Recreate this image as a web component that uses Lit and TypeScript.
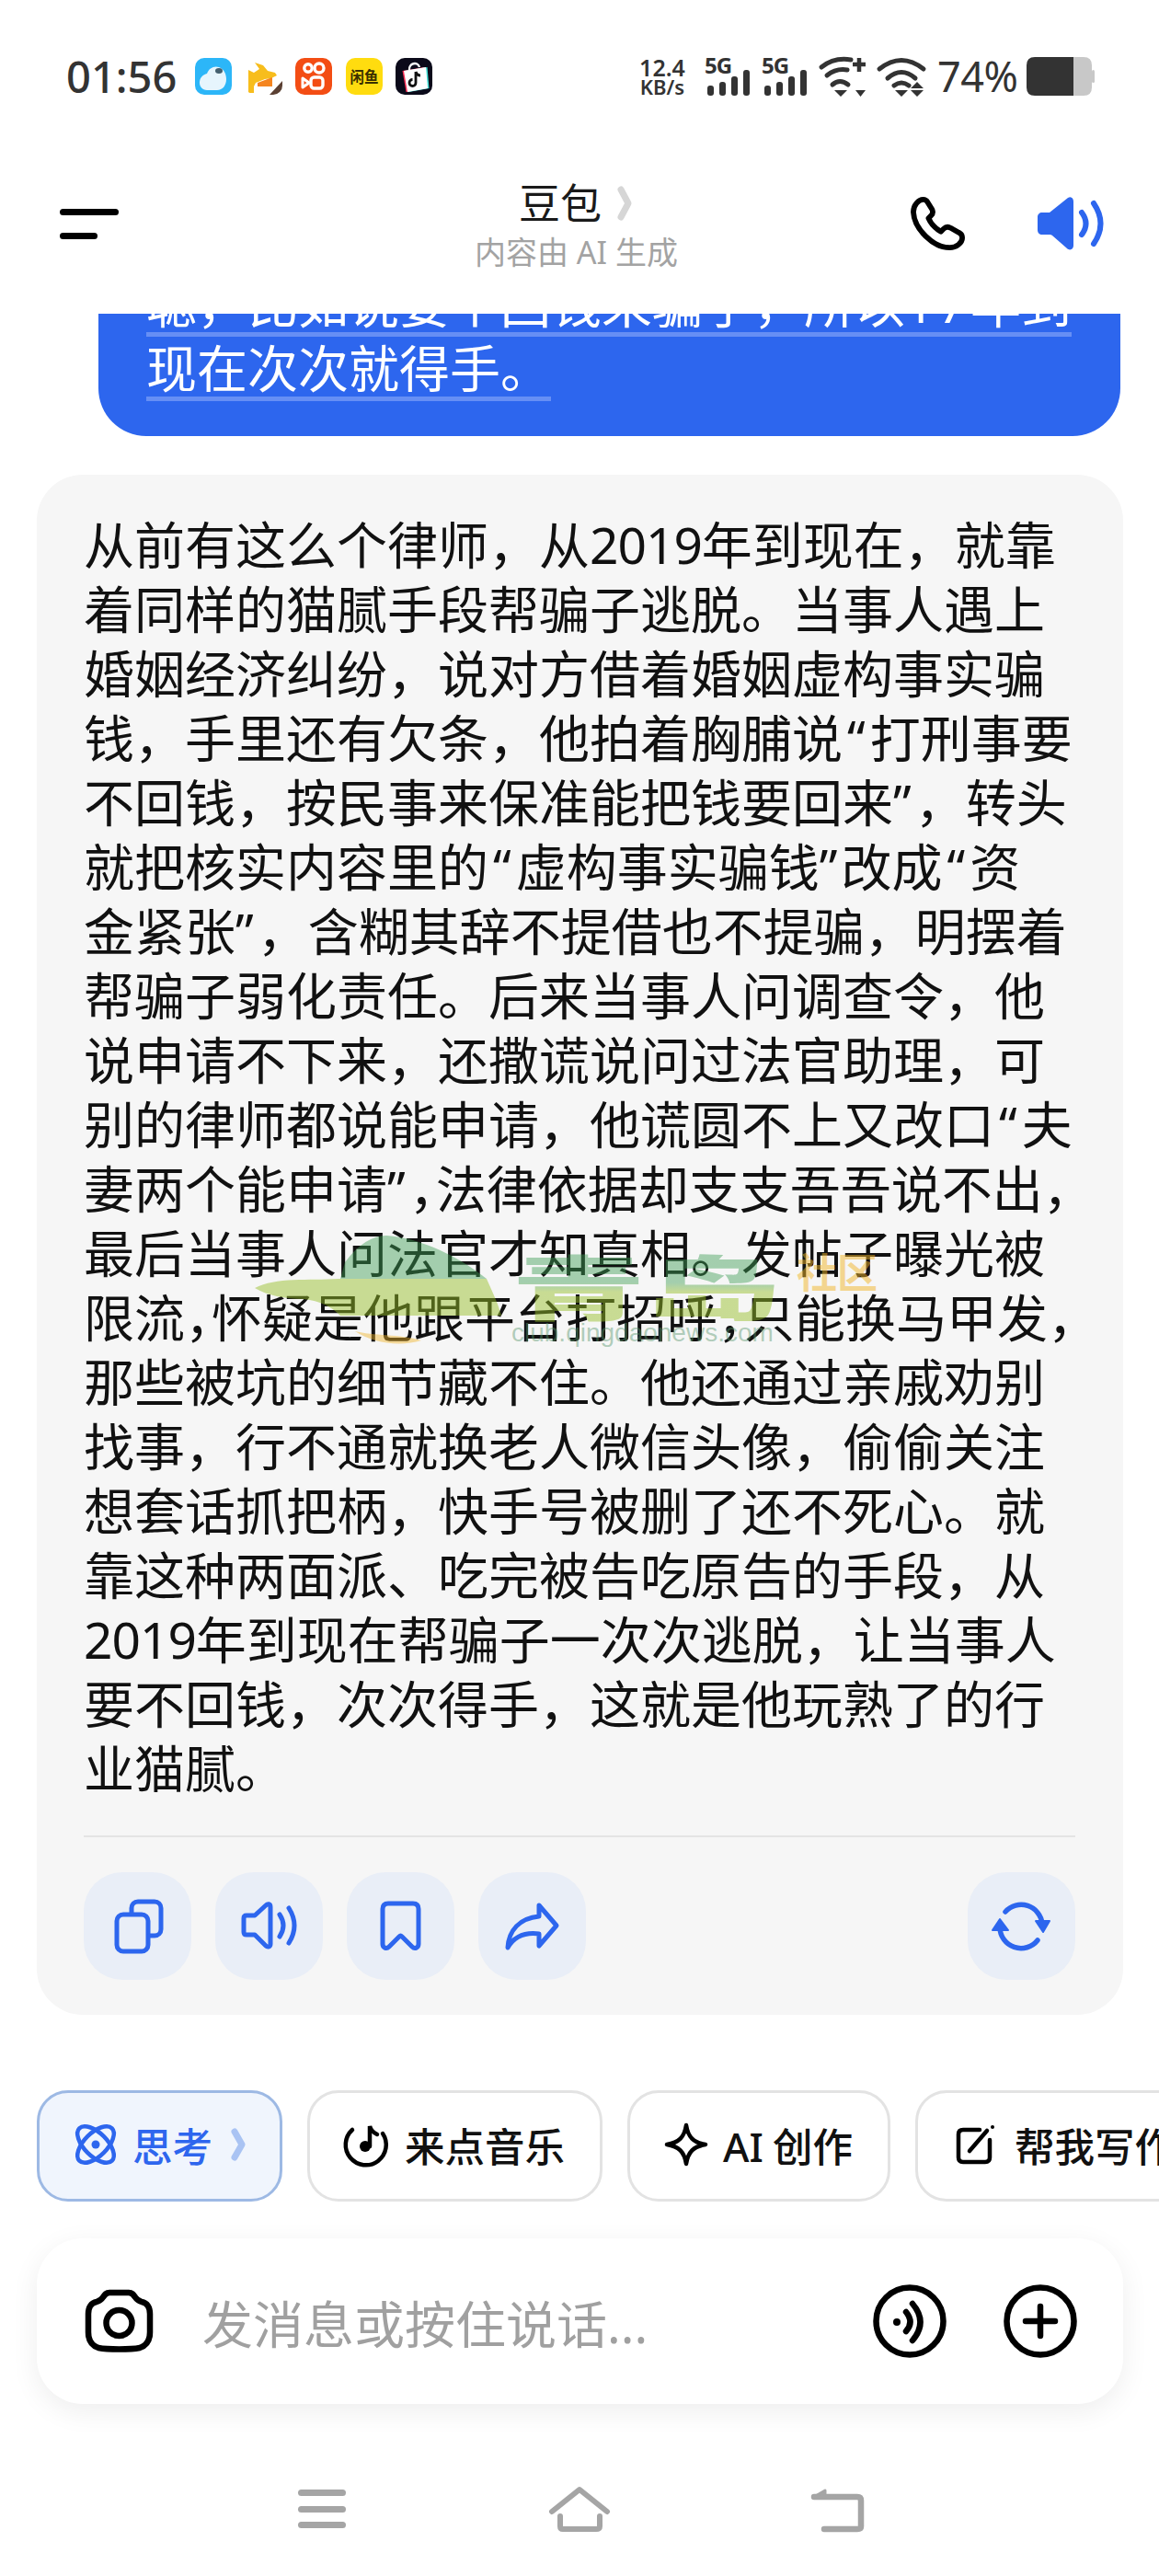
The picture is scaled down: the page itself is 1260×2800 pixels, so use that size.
import { LitElement, html, css, svg } from "lit";
import { customElement } from "lit/decorators.js";

const o = html`<span class="o">“</span>`;
const c = html`<span class="c">”</span>`;
const h = html`<span class="h">，</span>`;
const y = html`<span class="d">2019</span>`;

const lines = [
  html`从前有这么个律师，从${y}年到现在，就靠`,
  html`着同样的猫腻手段帮骗子逃脱。当事人遇上`,
  html`婚姻经济纠纷，说对方借着婚姻虚构事实骗`,
  html`钱，手里还有欠条，他拍着胸脯说${o}打刑事要`,
  html`不回钱，按民事来保准能把钱要回来${c}，转头`,
  html`就把核实内容里的${o}虚构事实骗钱${c}改成${o}资`,
  html`金紧张${c}，含糊其辞不提借也不提骗，明摆着`,
  html`帮骗子弱化责任。后来当事人问调查令，他`,
  html`说申请不下来，还撒谎说问过法官助理，可`,
  html`别的律师都说能申请，他谎圆不上又改口${o}夫`,
  html`妻两个能申请${c}${h}法律依据却支支吾吾说不出${h}`,
  html`最后当事人问法官才知真相。发帖子曝光被`,
  html`限流${h}怀疑是他跟平台打招呼${h}只能换马甲发${h}`,
  html`那些被坑的细节藏不住。他还通过亲戚劝别`,
  html`找事，行不通就换老人微信头像，偷偷关注`,
  html`想套话抓把柄，快手号被删了还不死心。就`,
  html`靠这种两面派、吃完被告吃原告的手段，从`,
  html`${y}年到现在帮骗子一次次逃脱，让当事人`,
  html`要不回钱，次次得手，这就是他玩熟了的行`,
  html`业猫腻。`,
];

const signal = svg`<svg class="bars" viewBox="0 0 49 28" width="49" height="28"><g fill="#333"><rect x="3" y="17" width="7" height="11" rx="3"/><rect x="16" y="13" width="7" height="15" rx="3"/><rect x="29" y="7" width="7" height="21" rx="3"/><rect x="42" y="0" width="7" height="28" rx="3"/></g></svg>`;

@customElement("app-root")
export class AppRoot extends LitElement {
  static styles = css`
    :host {
      display: block;
      width: 1260px;
      height: 2800px;
      overflow: hidden;
      background: #fff;
      color: #111;
      font-family: "Noto Sans", "Noto Sans CJK SC", sans-serif;
    }
    svg { display: block; flex-shrink: 0; overflow: visible; }

    .status { height: 120px; box-sizing: border-box; padding: 62px 70px 0 72px; display: flex; align-items: flex-start; color: #333; }
    .time { font-size: 47px; font-weight: 500; line-height: 42px; width: 140px; }
    .apps { display: flex; gap: 14.5px; margin-top: 1px; }
    .app { width: 40px; height: 40px; border-radius: 10px; overflow: hidden; }
    .right { margin-left: auto; display: flex; align-items: flex-start; }
    .speed { width: 50px; font-weight: 600; text-align: center; margin-right: 21px; }
    .speed div:first-child { font-size: 25px; line-height: 22px; }
    .speed div:last-child { font-size: 22px; line-height: 21px; }
    .net { width: 49px; height: 42px; margin-right: 13px; }
    .net b { display: block; font-size: 24px; line-height: 18px; font-weight: 700; letter-spacing: -1px; }
    .net .bars { margin-top: -4px; }
    .pct { font-size: 45px; line-height: 42px; width: 85px; margin: 0 12px; font-weight: 400; white-space: nowrap; letter-spacing: -0.5px; }

    .header { height: 221px; box-sizing: border-box; padding: 71px 61px 0 65px; display: grid; grid-template-columns: 451px 220px 1fr; align-items: start; }
    .menu { display: flex; flex-direction: column; gap: 19px; padding-top: 36px; }
    .menu i { display: block; height: 7px; border-radius: 4px; background: #000; }
    .menu i:first-child { width: 64px; }
    .menu i:last-child { width: 41px; }
    .title { display: flex; align-items: center; height: 60px; font-size: 45px; line-height: 60px; padding-left: 48px; white-space: nowrap; color: #1a1a1a; }
    .title svg { margin-left: 17px; }
    .sub { font-size: 34px; line-height: 40px; color: #a3a3a3; margin-top: 3px; white-space: nowrap; }
    .tools { display: flex; justify-content: flex-end; gap: 79px; padding-top: 23px; }

    .bubble { margin-left: 107px; width: 1111px; height: 133px; box-sizing: border-box; overflow: hidden; background: #2d66ee; border-radius: 0 0 52px 52px; padding-left: 52px; color: #fff; }
    .blines { margin-top: -45px; }
    .bline { box-sizing: border-box; width: fit-content; height: 70px; line-height: 68px; font-size: 55px; border-bottom: 5px solid #668ff5; white-space: nowrap; }
    .sp { letter-spacing: 4px; }

    .card { position: relative; margin: 42px 39px 0 40px; height: 1674px; box-sizing: border-box; background: #f6f6f6; border-radius: 50px; padding: 41px 52px 38px 51px; }
    .line { height: 70px; line-height: 70px; font-size: 55px; white-space: nowrap; color: #111; }
    .h { display: inline-block; width: 29px; }
    .o { margin: 0 5px; }
    .c { margin-right: 4px; }
    .d { letter-spacing: -1px; }
    .divider { height: 2px; background: #e4e4e4; margin-top: 38px; }
    .actions { display: flex; gap: 26px; margin-top: 38px; }
    .act { width: 117px; height: 117px; border-radius: 42px; background: #e9eef7; flex-shrink: 0; }
    .act.end { margin-left: auto; }
    .wm { position: absolute; left: 230px; top: 820px; pointer-events: none; }

    .chips { display: flex; gap: 27px; margin-top: 82px; padding-left: 40px; width: 1220px; overflow: hidden; }
    .chip { flex-shrink: 0; box-sizing: border-box; height: 121px; border: 3px solid #e3e3e3; border-radius: 34px; background: #fff; display: flex; align-items: center; padding: 0 0 3px 37px; gap: 18px; font-size: 43.5px; font-weight: 500; white-space: nowrap; color: #111; }
    .chip.on { border-color: #9db9e4; background: #f0f5fd; color: #2e66ee; padding-left: 39px; width: 267px; }
    .chip.on svg:last-child { margin-left: 2px; }
    .w2 { width: 321px; }
    .w3 { width: 286px; gap: 16px; }
    .w4 { width: 300px; padding-left: 41px; gap: 20px; }
    .ai { margin-right: 10px; }

    .input { margin: 40px 39px 0 40px; height: 180px; box-sizing: border-box; border-radius: 50px; background: #fff; box-shadow: 0 8px 30px rgba(0,0,0,.07); display: flex; align-items: center; padding: 0 50px 0 52px; }
    .ph { margin-left: 53px; font-size: 55px; color: #a0a0a0; white-space: nowrap; flex: 1; }
    .input .plus { margin-left: 62px; }

    .nav { width: 840px; margin: 89px auto 0; display: grid; grid-template-columns: repeat(3, 280px); justify-items: center; }
  `;

  render() {
    return html`
      <div class="status">
        <div class="time">01:56</div>
        <div class="apps">
          <svg class="app" viewBox="0 0 40 40"><rect width="40" height="40" fill="#2cb6f8"/><path d="M5 27c0-6 4-9 8-10 2-6 8-9 13-7 6 2 8 8 8 13 0 7-4 12-10 12H13c-5 0-8-4-8-8z" fill="#e6f5fd"/><ellipse cx="26" cy="14" rx="4" ry="3" fill="#44606f"/></svg>
          <svg class="app" viewBox="0 0 40 40"><rect width="40" height="40" fill="#fff"/><path d="M3 13l6 3 6-4-5-7 9 3 5 6 8 2 2 3-6 3-7 1-10 4-2 4v7H3z" fill="#f7bd1c"/><path d="M13 27l16-6v10H13z" fill="#f5851f"/><path d="M40 25v15H26z" fill="#5b4033"/></svg>
          <svg class="app" viewBox="0 0 40 40"><rect width="40" height="40" fill="#f34d14"/><g fill="none" stroke="#fff" stroke-width="3.4"><circle cx="14" cy="11" r="4.2"/><circle cx="26" cy="11" r="5"/><rect x="17" y="21" width="13" height="12" rx="3.5"/></g><path d="M8 22l7 5-7 5z" fill="none" stroke="#fff" stroke-width="3" stroke-linejoin="round"/></svg>
          <svg class="app" viewBox="0 0 40 40"><rect width="40" height="40" fill="#ffdc0f"/><text x="20" y="27" text-anchor="middle" font-size="17" font-weight="700" fill="#3a3000" textLength="31" lengthAdjust="spacingAndGlyphs">闲鱼</text></svg>
          <svg class="app" viewBox="0 0 40 40"><rect width="40" height="40" fill="#0b0a1a"/><path d="M9 14l24-4 2 23-22 4z" fill="#ff2d55" transform="translate(-1.5 0)"/><path d="M9 14l24-4 2 23-22 4z" fill="#45e3d8" transform="translate(1.5 0)"/><path d="M9 14l24-4 2 23-22 4z" fill="#fff"/><path d="M15 13c-1-7 9-10 11-3" fill="none" stroke="#fff" stroke-width="2.4"/><path d="M22 15v12a3.5 3.5 0 1 1-3.5-3.5M22 15c1 3 3 4 5 4" fill="none" stroke="#111" stroke-width="2.8"/></svg>
        </div>
        <div class="right">
          <div class="speed"><div>12.4</div><div>KB/s</div></div>
          <div class="net"><b>5G</b>${signal}</div>
          <div class="net" style="margin-right:14px"><b>5G</b>${signal}</div>
          <svg viewBox="0 0 50 43" width="50" height="43" style="margin-right:13px"><g fill="none" stroke="#333" stroke-width="5" stroke-linecap="round"><path d="M2 11Q16 0 34 3"/><path d="M8 20Q18 12 30 14"/><path d="M14 30Q22 23 31 30"/></g><path d="M36 8H50M43 1V16" stroke="#333" stroke-width="4.5"/><path d="M16 36H30L23 43z M39 36H50L44.5 43z" fill="#333"/></svg>
          <svg viewBox="0 0 53 43" width="53" height="43"><g fill="none" stroke="#333" stroke-width="5" stroke-linecap="round"><path d="M2 13Q26 -6 50 13"/><path d="M11 23Q26 10 41 23"/><path d="M18 31Q26 25 34 31"/></g><path d="M19 36H33L26 43z M43 27L50 34H36z M36 36H50L43 43z" fill="#333"/></svg>
          <div class="pct">74%</div>
          <svg viewBox="0 0 74 42" width="74" height="42"><path d="M60 0h2q9 0 9 9v24q0 9-9 9h-11V0z" fill="#c8c8c8"/><rect x="71" y="14" width="3" height="14" rx="1.5" fill="#c8c8c8"/><path d="M51 0H9Q0 0 0 9v24q0 9 9 9h42z" fill="#333"/></svg>
        </div>
      </div>

      <div class="header">
        <div class="menu"><i></i><i></i></div>
        <div>
          <div class="title">豆包<svg viewBox="0 0 16 38" width="16" height="38"><path d="M4 4L12 19L4 34" fill="none" stroke="#d6d6d6" stroke-width="7" stroke-linecap="round" stroke-linejoin="round"/></svg></div>
          <div class="sub">内容由 AI 生成</div>
        </div>
        <div class="tools">
          <svg viewBox="0 0 60 60" width="58" height="58"><path d="M13 3C8 3 2 9 2 17C3 36 24 57 43 57C50 57 57 52 57 46C57 43 55 41 53 40L44 35C41 33 38 34 36 36L33 39C26 35 22 31 19 24L22 21C24 19 24 16 23 14L18 6C17 4 15 3 13 3Z" fill="none" stroke="#000" stroke-width="6" stroke-linejoin="round"/></svg>
          <svg viewBox="0 0 71 58" width="71" height="58"><path d="M33 1C37-1 39 2 39 5V53C39 57 35 59 32 56L16 42C15 41 14 41 13 41H5C2 41 0 39 0 36V22C0 19 2 17 5 17H13Z" fill="#2d66ee"/><path d="M48 17Q57 29 48 41M61 7Q76 29 61 51" fill="none" stroke="#2d66ee" stroke-width="6" stroke-linecap="round"/></svg>
        </div>
      </div>

      <div class="bubble"><div class="blines">
        <div class="bline">聪，比如说要个回钱来骗子，所以<span class="sp">17</span>年到</div>
        <div class="bline">现在次次就得手。</div>
      </div></div>

      <div class="card">
        ${lines.map((l) => html`<div class="line">${l}</div>`)}
        <div class="divider"></div>
        <div class="actions">
          <div class="act"><svg viewBox="0 0 117 117" width="117" height="117" fill="none" stroke="#2d66ee" stroke-width="5" stroke-linecap="round" stroke-linejoin="round"><rect x="36" y="46" width="34" height="40" rx="7"/><path d="M52 45V39C52 35 55 32 59 32H77C81 32 84 35 84 39V62C84 66 81 69 77 69H71"/></svg></div>
          <div class="act"><svg viewBox="0 0 117 117" width="117" height="117" fill="none" stroke="#2d66ee" stroke-width="5" stroke-linecap="round" stroke-linejoin="round"><path d="M60 38C60 34 57 34 55 36L43 47H34C32 47 31 48 31 50V65C31 67 32 68 34 68H43L55 80C57 82 60 81 60 78Z"/><path d="M70 46Q78 58 70 70M80 39Q92 58 80 77"/></svg></div>
          <div class="act"><svg viewBox="0 0 117 117" width="117" height="117" fill="none" stroke="#2d66ee" stroke-width="5" stroke-linejoin="round"><path d="M45 34H72C76 34 78 36 78 40V78C78 82 74 84 71 81L60 70C59 69 58 69 57 70L46 81C43 84 39 82 39 78V40C39 36 41 34 45 34Z"/></svg></div>
          <div class="act"><svg viewBox="0 0 117 117" width="117" height="117" fill="none" stroke="#2d66ee" stroke-width="5" stroke-linejoin="round"><path d="M66 36L85 58L66 80V67C50 65 39 70 32 82C33 63 45 50 66 48Z"/></svg></div>
          <div class="act end"><svg viewBox="0 0 117 117" width="117" height="117"><g fill="none" stroke="#2d66ee" stroke-width="5.5" stroke-linecap="round"><path d="M41 43A23 23 0 0 1 81 56"/><path d="M76 74A23 23 0 0 1 35 60"/></g><path d="M74 53H89L82 65Z M27 63H44L35 51Z" fill="#2d66ee" stroke="#2d66ee" stroke-width="2" stroke-linejoin="round"/></svg></div>
        </div>
        <svg class="wm" viewBox="0 0 700 130" width="700" height="130">
          <defs><linearGradient id="wg" x1="0" y1="0" x2="0" y2="1"><stop offset="0.45" stop-color="rgba(62,157,85,.45)"/><stop offset="0.55" stop-color="rgba(150,190,40,.48)"/></linearGradient></defs>
          <path d="M105 36C120 16 135 7 150 7C185 9 230 30 259 54H100Z" fill="rgba(62,157,85,.45)"/>
          <path d="M7 64C30 52 66 56 98 54H259C266 70 272 82 275 94H100C90 84 78 78 60 76C40 76 20 72 7 64Z" fill="rgba(150,190,40,.48)"/>
          <path d="M116 111C135 116 165 114 188 121C165 128 135 124 116 111Z" fill="rgba(240,180,40,.45)"/>
          <g transform="scale(1 .52)"><text x="286" y="178" font-size="146" font-weight="900" fill="url(#wg)">青岛</text></g>
          <text x="596" y="64" font-size="44" font-weight="700" fill="rgba(240,180,40,.5)">社区</text>
          <text x="286" y="122" font-size="28" font-family="Liberation Sans" fill="rgba(90,150,110,.45)">club.qingdaonews.com</text>
        </svg>
      </div>

      <div class="chips">
        <div class="chip on">
          <svg viewBox="0 0 44 44" width="44" height="44" fill="none" stroke="#2d66ee" stroke-width="4.5"><ellipse cx="22" cy="22" rx="25" ry="12.5" transform="rotate(45 22 22)"/><ellipse cx="22" cy="22" rx="25" ry="12.5" transform="rotate(-45 22 22)"/><circle cx="22" cy="22" r="4.5" fill="#2d66ee" stroke="none"/></svg>
          思考
          <svg viewBox="0 0 16 36" width="16" height="36"><path d="M4 4L12 18L4 32" fill="none" stroke="#a9c3f3" stroke-width="7" stroke-linecap="round" stroke-linejoin="round"/></svg>
        </div>
        <div class="chip w2">
          <svg viewBox="0 0 48 48" width="48" height="48" fill="none" stroke="#000" stroke-width="4.5" stroke-linecap="round"><path d="M9 8A22 22 0 1 0 42 12"/><path d="M28 26V4C29 8 32 11 36 13"/><circle cx="23" cy="26" r="6" fill="#000" stroke="none"/></svg>
          来点音乐
        </div>
        <div class="chip w3">
          <svg viewBox="0 0 48 48" width="48" height="48"><path d="M24 3C26 16 32 22 45 24C32 26 26 32 24 45C22 32 16 26 3 24C16 22 22 16 24 3Z" fill="none" stroke="#000" stroke-width="4.5" stroke-linejoin="round"/></svg>
          <span><span class="ai">AI</span>创作</span>
        </div>
        <div class="chip w4">
          <svg viewBox="0 0 44 44" width="44" height="44" fill="none" stroke="#000" stroke-width="4.5" stroke-linecap="round"><path d="M26 6H8Q3 6 3 11V36Q3 41 8 41H32Q37 41 37 36V17"/><path d="M15 29L34 7"/><circle cx="40" cy="3" r="2" fill="#000" stroke="none"/></svg>
          帮我写作
        </div>
      </div>

      <div class="input">
        <svg viewBox="0 0 75 70" width="75" height="70" fill="none" stroke="#000" stroke-width="6.5" stroke-linejoin="round"><path d="M27 4H48C52 4 53 6 55 9C57 12 59 13 62 14C68 15 71 20 71 27V47C71 58 66 62 60 64C50 66 25 66 15 64C9 62 4 58 4 47V27C4 20 7 15 13 14C16 13 18 12 20 9C22 6 23 4 27 4Z"/><circle cx="37.5" cy="37" r="14"/></svg>
        <div class="ph">发消息或按住说话...</div>
        <svg viewBox="0 0 80 80" width="80" height="80" fill="none" stroke="#000" stroke-width="6.5" stroke-linecap="round"><circle cx="40" cy="40" r="36.5"/><circle cx="26" cy="41" r="4" fill="#000" stroke="none"/><path d="M36 30Q45 41 36 51M43 21Q60 41 43 61"/></svg>
        <svg class="plus" viewBox="0 0 80 80" width="80" height="80" fill="none" stroke="#000" stroke-width="6.5" stroke-linecap="round"><circle cx="40" cy="40" r="36.5"/><path d="M24 40H56M40 24V56"/></svg>
      </div>

      <div class="nav">
        <svg viewBox="0 0 52 48" width="52" height="48"><g fill="#a5a5a5"><rect y="4" width="52" height="7" rx="3.5"/><rect y="22" width="52" height="7" rx="3.5"/><rect y="39" width="52" height="7" rx="3.5"/></g></svg>
        <svg viewBox="0 0 70 50" width="70" height="50" fill="none" stroke="#a5a5a5" stroke-width="6" stroke-linecap="round" stroke-linejoin="round"><path d="M5 28L35 4L65 28"/><path d="M14 33V44Q14 47 17 47H53Q57 47 57 44V33"/></svg>
        <svg viewBox="0 0 60 50" width="60" height="50" fill="none" stroke="#a5a5a5" stroke-width="6.5" stroke-linecap="round" stroke-linejoin="round"><path d="M5 12H52Q56 12 56 16V44Q56 47 52 47H16"/><path d="M5 12L17 5V12Z" fill="#a5a5a5" stroke-width="3"/></svg>
      </div>
    `;
  }
}
